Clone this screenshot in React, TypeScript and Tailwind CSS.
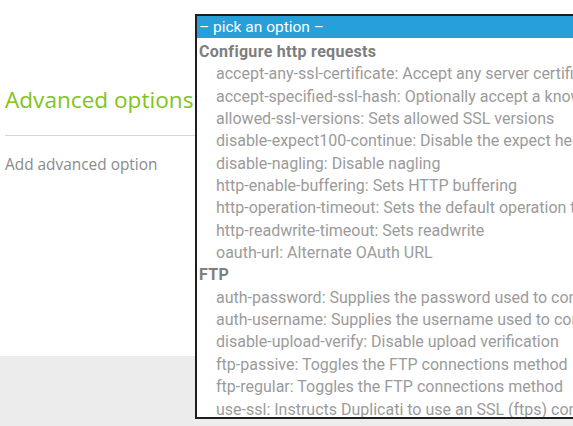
import React from "react";

const groups: { title: string; items: string[] }[] = [
  {
    title: "Configure http requests",
    items: [
      "accept-any-ssl-certificate: Accept any server certificate",
      "accept-specified-ssl-hash: Optionally accept a known SSL certificate",
      "allowed-ssl-versions: Sets allowed SSL versions",
      "disable-expect100-continue: Disable the expect header",
      "disable-nagling: Disable nagling",
      "http-enable-buffering: Sets HTTP buffering",
      "http-operation-timeout: Sets the default operation timeout",
      "http-readwrite-timeout: Sets readwrite",
      "oauth-url: Alternate OAuth URL",
    ],
  },
  {
    title: "FTP",
    items: [
      "auth-password: Supplies the password used to connect to the server",
      "auth-username: Supplies the username used to connect to the server",
      "disable-upload-verify: Disable upload verification",
      "ftp-passive: Toggles the FTP connections method",
      "ftp-regular: Toggles the FTP connections method",
      "use-ssl: Instructs Duplicati to use an SSL (ftps) connection",
    ],
  },
];

export default function App() {
  return (
    <div className="relative w-[573px] h-[426px] overflow-hidden bg-white flex flex-col">
      <div className="flex-1 pl-[5px] pt-[85px] font-['Open_Sans',sans-serif]">
        <div className="text-[22.6px] leading-[30px] text-[#80c41c]">Advanced options</div>
        <div className="mt-[20px] h-px bg-[#d4d4d4]" />
        <div className="mt-[19px] text-[15.4px] leading-[20px] text-[#8a8a8a]">Add advanced option</div>
      </div>
      <div className="h-[70px] bg-[#ececec]" />

      <div className="absolute left-[195px] top-[14px] w-[420px] h-[405px] border-2 border-[#1e1e1e] bg-white overflow-hidden font-['Roboto',sans-serif] text-[16px] whitespace-nowrap">
        <div className="h-[22px] leading-[23px] bg-[#27a0da] text-white pl-[2px] text-[15.5px]">– pick an option –</div>
        <div className="pt-[3px]">
          {groups.map((g) => (
            <div key={g.title}>
              <div className="h-[22.35px] leading-[22.35px] pl-[2px] font-bold text-[#7e7e7e] tracking-[0.3px]">{g.title}</div>
              {g.items.map((it) => (
                <div key={it} className="h-[22.35px] leading-[22.35px] pl-[19px] text-[#9b9b9b]">
                  {it}
                </div>
              ))}
            </div>
          ))}
        </div>
      </div>
    </div>
  );
}
